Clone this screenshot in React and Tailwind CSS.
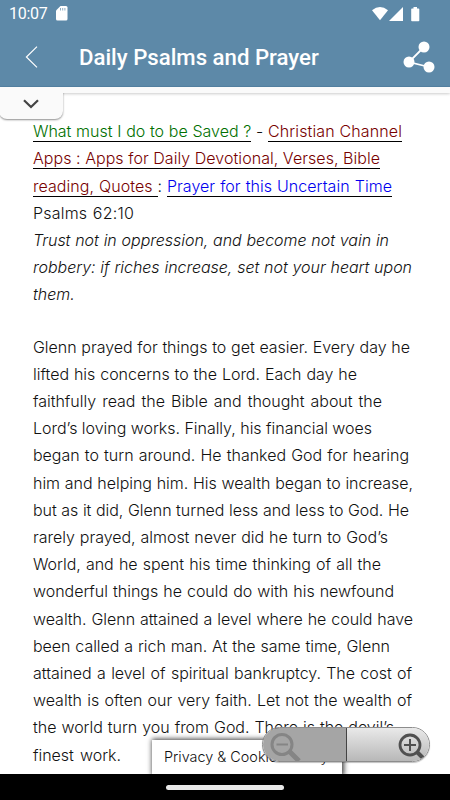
const verse = [
  [356, 'Trust not in oppression, and become not vain in'],
  [379, 'robbery: if riches increase, set not your heart upon'],
  [43, 'them.'],
]

const story = [
  [377, 'Glenn prayed for things to get easier. Every day he'],
  [324, 'lifted his concerns to the Lord. Each day he'],
  [349, 'faithfully read the Bible and thought about the'],
  [339, 'Lord’s loving works. Finally, his financial woes'],
  [376, 'began to turn around. He thanked God for hearing'],
  [380, 'him and helping him. His wealth began to increase,'],
  [376, 'but as it did, Glenn turned less and less to God. He'],
  [355, 'rarely prayed, almost never did he turn to God’s'],
  [348, 'World, and he spent his time thinking of all the'],
  [361, 'wonderful things he could do with his newfound'],
  [380, 'wealth. Glenn attained a level where he could have'],
  [357, 'been called a rich man. At the same time, Glenn'],
  [379, 'attained a level of spiritual bankruptcy. The cost of'],
  [379, 'wealth is often our very faith. Let not the wealth of'],
  [361, 'the world turn you from God. There is the devil’s'],
  [88, 'finest work.'],
]

function Line({ width, children }) {
  return (
    <div className="h-[27.2px] whitespace-nowrap [text-align-last:justify]" style={{ width }}>
      {children}
    </div>
  )
}

function StatusBar() {
  return (
    <div className="flex h-7 items-center pl-[9px] pr-[30px] text-white">
      <span className="font-[Roboto] text-base leading-7 tracking-[-0.3px]">10:07</span>
      <svg className="ml-[9px] mt-[-1px]" width="12" height="15" viewBox="0 0 12 15">
        <path d="M4.5 0H10Q11.5 0 11.5 1.5V13Q11.5 14.5 10 14.5H1.5Q0 14.5 0 13V4.5Z" fill="#fff" />
        <path d="M4.5 2v2.5M6.7 2v2.5M8.9 2v2.5" stroke="#5d89a8" strokeWidth=".7" />
      </svg>
      <svg className="ml-auto mt-[-1px]" width="48" height="16" viewBox="0 0 48 16" fill="#fff">
        <path d="M0 4.2Q8 -2.2 16 4.2L8 14.2Z" />
        <path d="M31 1V15H17Z" />
        <path d="M41.5 1h3.5v1.5h1.5q.8 0 .8.8V14.5q0 .8-.8.8H40q-.8 0-.8-.8V3.3q0-.8.8-.8h1.5Z" />
      </svg>
    </div>
  )
}

function Header() {
  return (
    <div className="flex h-[59px] items-center border-b border-[#5583a4] pl-[25px] pr-[15px] text-white">
      <svg width="13" height="22" viewBox="0 0 13 22" fill="none" stroke="#fff" strokeWidth="1.2">
        <path d="M12 .6 1.4 11 12 21.4" />
      </svg>
      <h1 className="ml-[41px] whitespace-nowrap font-[Roboto] text-[22.2px] font-medium leading-8">
        Daily Psalms and Prayer
      </h1>
      <svg className="ml-auto" width="32" height="32" viewBox="0 0 32 32" fill="#fff">
        <path d="M21 6 6 21 26 26" fill="none" stroke="#fff" strokeWidth="1.8" />
        <circle cx="21" cy="6" r="5.5" />
        <circle cx="6" cy="21" r="5.5" />
        <circle cx="26" cy="26" r="5.5" />
      </svg>
    </div>
  )
}

function ZoomControls() {
  return (
    <div className="absolute left-[262px] top-[727px] flex h-[35px] w-[168px] overflow-hidden rounded-full border border-[#8c8c8c] shadow-[0_1px_1px_rgba(0,0,0,0.25)]">
      <div className="flex w-[84px] items-center border-r border-[#444] bg-[#a5a5a5] pl-[7px]">
        <svg width="32" height="32" viewBox="0 0 32 32" fill="none" stroke="#858585">
          <circle cx="12" cy="15.5" r="10" strokeWidth="3" />
          <path d="M6.5 15.5h11.5" strokeWidth="2" />
          <path d="M19 22 29 32" strokeWidth="5" />
        </svg>
      </div>
      <div className="flex flex-1 items-center justify-end bg-linear-to-b from-[#e9e9e9] to-[#b8b8b8] pr-[3px]">
        <svg width="28" height="30" viewBox="0 0 28 30" fill="none" stroke="#505050">
          <circle cx="12" cy="15" r="10" strokeWidth="2.8" />
          <path d="M6 15h12M12 9v12" strokeWidth="2" />
          <path d="M19 22 25.5 28.5" strokeWidth="4" />
        </svg>
      </div>
    </div>
  )
}

export default function App() {
  return (
    <div className="relative flex h-[800px] w-[450px] flex-col overflow-hidden bg-white">
      <header className="bg-[#5d89a8]">
        <StatusBar />
        <Header />
      </header>
      <div className="h-[6px] shrink-0 bg-[#fafafa] shadow-[0_1px_3px_rgba(0,0,0,0.2)]" />
      <div className="absolute left-[-1px] top-[88px] flex h-[31px] w-[64px] items-center justify-center rounded-b-lg bg-[#fafafa] pt-px shadow-[0_1px_2px_rgba(0,0,0,0.45)] [clip-path:inset(5px_-5px_-5px_0)]">
        <svg width="16" height="10" viewBox="0 0 16 10" fill="none" stroke="#444" strokeWidth="2.2">
          <path d="M1 1.2 8 8 15 1.2" />
        </svg>
      </div>

      <main className="flex-1 overflow-hidden pl-[33px] pt-[25.2px] font-[Inter] text-base font-light leading-[27.2px] tracking-[-0.03px] text-[#111]">
        <Line width={369}>
          <a className="border-b border-black tracking-[-0.03px] text-[#007000]">What must I do to be Saved ?</a> -{' '}
          <a className="border-b border-black tracking-[0.1px] text-[#780000]">Christian Channel</a>
        </Line>
        <Line width={347}>
          <a className="border-b border-black tracking-[0.05px] text-[#780000]">Apps : Apps for Daily Devotional, Verses, Bible</a>
        </Line>
        <Line width={359}>
          <a className="border-b border-black tracking-[0.05px] text-[#780000]">reading, Quotes </a>:{' '}
          <a className="border-b border-black tracking-[0.05px] text-[#0000ee]">Prayer for this Uncertain Time</a>
        </Line>
        <Line width={101}>
          <span className="tracking-[0.2px]">Psalms 62:10</span>
        </Line>
        <div className="italic">
          {verse.map(([width, text]) => (
            <Line key={text} width={width}>{text}</Line>
          ))}
        </div>
        <div className="mt-[25.2px]">
          {story.map(([width, text]) => (
            <Line key={text} width={width}>{text}</Line>
          ))}
        </div>
      </main>

      <div className="absolute left-[152px] top-[740px] h-[35px] w-[190px] bg-white pl-[12px] font-[Inter] text-[14.4px] font-light leading-[34px] text-[#111] shadow-[1px_0_5px_1px_rgba(0,0,0,0.75)]">
        Privacy &amp; Cookies Policy
      </div>
      <ZoomControls />
      <footer className="relative flex h-[26px] shrink-0 justify-center bg-black pt-[11px]">
        <div className="h-[5px] w-[118px] rounded-full bg-[#e8e8e8]" />
      </footer>
    </div>
  )
}
